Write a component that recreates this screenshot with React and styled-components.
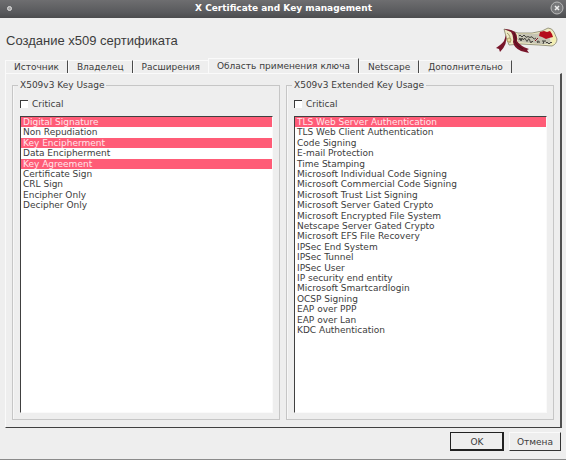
import { useState } from "react";
import styled, { createGlobalStyle } from "styled-components";

const GlobalStyle = createGlobalStyle`
    * {
        box-sizing: border-box;
    }
    body {
        margin: 0;
        color: #3c3c3c;
        background-color: #eeeeee;
        font-family: "DejaVu Sans", Verdana, sans-serif;
        font-size: 9px;
    }
    button, select {
        color: inherit;
        font: inherit;
    }
`

const Window = styled.div`
    display: flex;
    flex-direction: column;
    min-height: 100vh;
    border-bottom: 1px solid #8a8a8a;
`

const TitleBar = styled.header`
    display: grid;
    grid-template-columns: 16px 1fr 16px;
    align-items: center;
    height: 18px;
    padding: 0 0 2px 1px;
    color: white;
    background: linear-gradient(#6e6e70, #58595c 70%, #4b4c4e);
`

const Title = styled.h1`
    margin: 0;
    font-size: 9px;
    text-align: center;
`

const MenuButton = styled.button`
    justify-self: center;
    width: 5px;
    height: 5px;
    padding: 0;
    border: 1px solid #dddddd;
    border-radius: 50%;
    background-color: #a5a5a5;
`

const CloseButton = styled.button`
    display: flex;
    width: 14px;
    height: 14px;
    padding: 0;
    border: none;
    background: none;
`

const Heading = styled.div`
    display: flex;
    align-items: center;
    justify-content: space-between;
    height: 41px;
    padding: 3px 8px 0 6px;
`

const HeadingText = styled.h2`
    margin: 0;
    font-family: "Liberation Sans", Arial, sans-serif;
    font-size: 13px;
    font-weight: normal;
`

const Tabs = styled.div`
    display: flex;
    align-items: flex-end;
    height: 14px;
    padding-left: 5px;
`

const Tab = styled.button`
    height: ${({ $active }) => $active ? 15 : 13}px;
    padding: 0 8px;
    white-space: nowrap;
    border: solid #fafafa;
    border-width: 1px 0 0 1px;
    border-right: ${({ $beforeActive }) => $beforeActive ? "none" : "1px solid #4a4a4a"};
    background-color: #eeeeee;
    z-index: ${({ $active }) => $active ? 1 : 0};
`

const TabPage = styled.div`
    flex: 1;
    display: grid;
    grid-template-columns: 1fr 1fr;
    gap: 6px;
    margin: 0 4px 0 5px;
    padding: 5px 6px 7px;
    border: 1px solid #fafafa;
    border-right: 2px solid #505050;
    border-bottom: 1px solid #404040;
`

const Group = styled.fieldset`
    display: flex;
    flex-direction: column;
    min-width: 0;
    margin: 0;
    padding: 7px 6px 6px 7px;
    border: 1px solid #c6c6c6;
    box-shadow: inset 1px 0 #f7f7f7;
`

const Legend = styled.legend`
    margin-left: -2px;
    padding: 0 2px;
    line-height: 12px;
`

const CheckLabel = styled.label`
    display: flex;
    align-items: center;
    gap: 4px;
    height: 12px;
    margin-bottom: 6px;
`

const CheckBox = styled.input`
    appearance: none;
    width: 8px;
    height: 8px;
    margin: 0;
    border: solid #3a3a3a;
    border-width: 1px 0 0 1px;
    background-color: white;
    &:checked {
        background-color: #ff5c77;
    }
`

const ListBox = styled.select`
    flex: 1;
    width: 100%;
    padding: 0;
    overflow: auto;
    border: 1px solid #fafafa;
    border-top-color: #404040;
    border-left-color: #404040;
    border-radius: 0;
    outline: none;
    background-color: white;
`

const Option = styled.option`
    height: 10px;
    min-height: 0;
    padding: 0 2px;
    line-height: 10px;
    &:nth-child(5n + 2), &:nth-child(5n + 4) {
        height: 11px;
    }
    &:checked {
        background: linear-gradient(#ff5c77, #ff5c77);
        -webkit-text-fill-color: #ffe6ea;
    }
`

const Buttons = styled.footer`
    display: flex;
    justify-content: flex-end;
    gap: 5px;
    padding: 4px 5px 8px;
`

const DialogButton = styled.button`
    min-width: ${({ $primary }) => $primary ? 54 : 52}px;
    height: 19px;
    padding: 0 7px;
    border: 1px solid #fafafa;
    border-right-color: #333333;
    border-bottom-color: #333333;
    background-color: #eeeeee;
    ${({ $primary }) => $primary && "border: 1px solid #222222; box-shadow: inset -1px -1px #222222;"}
`

const TABS = ["Источник", "Владелец", "Расширения", "Область применения ключа", "Netscape", "Дополнительно"]

const KEY_USAGE = [
    "Digital Signature",
    "Non Repudiation",
    "Key Encipherment",
    "Data Encipherment",
    "Key Agreement",
    "Certificate Sign",
    "CRL Sign",
    "Encipher Only",
    "Decipher Only",
]

const EXTENDED_KEY_USAGE = [
    "TLS Web Server Authentication",
    "TLS Web Client Authentication",
    "Code Signing",
    "E-mail Protection",
    "Time Stamping",
    "Microsoft Individual Code Signing",
    "Microsoft Commercial Code Signing",
    "Microsoft Trust List Signing",
    "Microsoft Server Gated Crypto",
    "Microsoft Encrypted File System",
    "Netscape Server Gated Crypto",
    "Microsoft EFS File Recovery",
    "IPSec End System",
    "IPSec Tunnel",
    "IPSec User",
    "IP security end entity",
    "Microsoft Smartcardlogin",
    "OCSP Signing",
    "EAP over PPP",
    "EAP over Lan",
    "KDC Authentication",
]

function CertificateLogo() {
    return (
        <svg width="62" height="30" viewBox="0 -3 62 30" aria-hidden="true">
            {/* parchment */}
            <path d="M8 1 L15 3 L22 5 L36 5 L46 3 L52 0 Q56 0 58 4 L61 11 Q61 16 56 18 L43 17 L25 16 L13 17 Q10 10 8 1Z" fill="#eeeac4" stroke="#77745c" strokeWidth="0.7" />
            <path d="M22 6 L36 6 L46 5 L53 7 L55 16 L43 16 L22 14Z" fill="#c6c4b4" />
            <path d="M52 1 Q59 5 60 12 Q58 17 55 17 Q58 10 52 1Z" fill="#f3efb0" />
            {/* handwriting */}
            <path d="M23 8 q1 -2 2 0 t2 0 t2 0 t2 1 t2 0 t2 0 t2 1 t3 0 M23 12 l1 -2 l1 3 l1 -3 q1 3 2 1 t2 1 t2 0 t2 1 t2 0 l1 1 M42 15 q-2 -2 0 -2 t1 2 M46 13 h4 m-2 0 l-1 3 m3 -1 q1 -2 2 0 t2 0 t2 0" fill="none" stroke="#34332f" strokeWidth="0.9" />
            {/* seal */}
            <path d="M44 4 L48 3 L51 4 L54 3 L56 6 L57 9 L53 10 L50 11 L46 9 L43 8Z" fill="#b50d1c" />
            <path d="M39 13 l3 -3" stroke="#8c1726" />
            {/* ribbon */}
            <path d="M10 7 Q12 16 4 24 L3 21 L0 20 Q6 16 8 13 L10 7Z" fill="#78152a" />
            <path d="M8 1 Q14 1 19 4 Q22 8 21 13 Q24 18 33 21 L31 22 L33 25 L25 23 Q18 20 17 14 Q18 8 15 4 L8 1Z" fill="#78152a" />
            <path d="M18 5 Q20 9 19 14 Q21 18 27 21" fill="none" stroke="#451019" strokeWidth="0.8" />
            <path d="M11 5 Q15 7 14 15" fill="none" stroke="#8a8058" strokeWidth="0.8" />
            <circle cx="13" cy="12" r="2" fill="#e6d9a0" stroke="#a68f55" strokeWidth="0.8" />
        </svg>
    )
}

function UsageGroup(props) {
    const { title, options, defaultSelected } = props

    return (
        <Group>
            <Legend>{title}</Legend>
            <CheckLabel>
                <CheckBox type="checkbox" />
                Critical
            </CheckLabel>
            <ListBox multiple defaultValue={defaultSelected} aria-label={title}>
                {options.map((option) => (
                    <Option key={option} value={option}>{option}</Option>
                ))}
            </ListBox>
        </Group>
    )
}

function App() {
    const [activeTab, setActiveTab] = useState(3)

    return (
        <Window>
            <GlobalStyle />
            <TitleBar>
                <MenuButton aria-label="Меню" />
                <Title>X Certificate and Key management</Title>
                <CloseButton aria-label="Закрыть">
                    <svg width="14" height="14" viewBox="0 0 14 14">
                        <circle cx="7" cy="7" r="6" fill="#77787a" stroke="#b9b9b9" />
                        <path d="M5 5 L9 9 M9 5 L5 9" stroke="#eeeeee" strokeWidth="1.5" />
                    </svg>
                </CloseButton>
            </TitleBar>
            <Heading>
                <HeadingText>Создание x509 сертификата</HeadingText>
                <CertificateLogo />
            </Heading>
            <Tabs role="tablist">
                {TABS.map((tab, index) => (
                    <Tab
                        key={tab}
                        role="tab"
                        aria-selected={index === activeTab}
                        $active={index === activeTab}
                        $beforeActive={index === activeTab - 1}
                        onClick={() => setActiveTab(index)}
                    >
                        {tab}
                    </Tab>
                ))}
            </Tabs>
            <TabPage role="tabpanel">
                <UsageGroup
                    title="X509v3 Key Usage"
                    options={KEY_USAGE}
                    defaultSelected={["Digital Signature", "Key Encipherment", "Key Agreement"]}
                />
                <UsageGroup
                    title="X509v3 Extended Key Usage"
                    options={EXTENDED_KEY_USAGE}
                    defaultSelected={["TLS Web Server Authentication"]}
                />
            </TabPage>
            <Buttons>
                <DialogButton $primary>OK</DialogButton>
                <DialogButton>Отмена</DialogButton>
            </Buttons>
        </Window>
    );
}

export default App;
